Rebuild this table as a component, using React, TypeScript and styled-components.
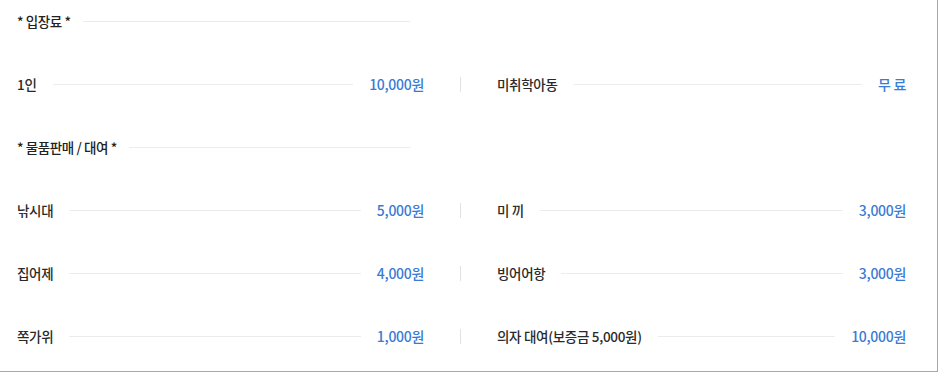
import React from 'react'
import styled, {createGlobalStyle} from 'styled-components'

const GlobalStyle = createGlobalStyle`
  html, body {
    margin: 0;
    padding: 0;
    background: #fff;
  }
  body {
    font-family: "Noto Sans CJK KR", "Noto Sans", sans-serif;
  }
`

const Panel = styled.div`
  box-sizing: border-box;
  width: 938px;
  height: 372px;
  padding: 11px 0 0 17px;
  border-right: 1px solid #a8a8a8;
  border-bottom: 1px solid #a8a8a8;
  display: flex;
  flex-direction: column;
  gap: 43px;
`

const Heading = styled.div`
  width: 393px;
  height: 20px;
  display: flex;
  align-items: center;
  gap: 12px;
  font-size: 13.5px;
  font-weight: 500;
  color: #222;
  letter-spacing: -0.4px;
  white-space: nowrap;
`

const Line = styled.span`
  flex: 1;
  height: 1px;
  background: #ececec;
`

const Row = styled.div`
  height: 20px;
  display: grid;
  grid-template-columns: 407px 1px 409px;
  column-gap: 36px;
  align-items: center;
`

const Divider = styled.span`
  width: 1px;
  height: 15px;
  background: #e2e2e2;
`

const Item = styled.div`
  display: flex;
  align-items: center;
  gap: 16px;
  white-space: nowrap;
`

const Label = styled.span`
  font-size: 13.5px;
  font-weight: 500;
  color: #2a2a2a;
  letter-spacing: -0.3px;
`

const Price = styled.span`
  font-size: 14px;
  font-weight: 500;
  color: #3a7bd5;
  letter-spacing: -0.3px;
`

type Fee = {label: string; price: string}

const FeeItem = ({label, price}: Fee) => (
  <Item>
    <Label>{label}</Label>
    <Line />
    <Price>{price}</Price>
  </Item>
)

const admission: [Fee, Fee][] = [
  [{label: '1인', price: '10,000원'}, {label: '미취학아동', price: '무 료'}],
]

const goods: [Fee, Fee][] = [
  [{label: '낚시대', price: '5,000원'}, {label: '미 끼', price: '3,000원'}],
  [{label: '집어제', price: '4,000원'}, {label: '빙어어항', price: '3,000원'}],
  [{label: '쪽가위', price: '1,000원'}, {label: '의자 대여(보증금 5,000원)', price: '10,000원'}],
]

const FeeRow = ({pair}: {pair: [Fee, Fee]}) => (
  <Row>
    <FeeItem {...pair[0]} />
    <Divider />
    <FeeItem {...pair[1]} />
  </Row>
)

export default function App() {
  return (
    <>
      <GlobalStyle />
      <Panel>
        <Heading>
          * 입장료 *
          <Line />
        </Heading>
        {admission.map((pair, i) => (
          <FeeRow key={i} pair={pair} />
        ))}
        <Heading>
          * 물품판매 / 대여 *
          <Line />
        </Heading>
        {goods.map((pair, i) => (
          <FeeRow key={i} pair={pair} />
        ))}
      </Panel>
    </>
  )
}
